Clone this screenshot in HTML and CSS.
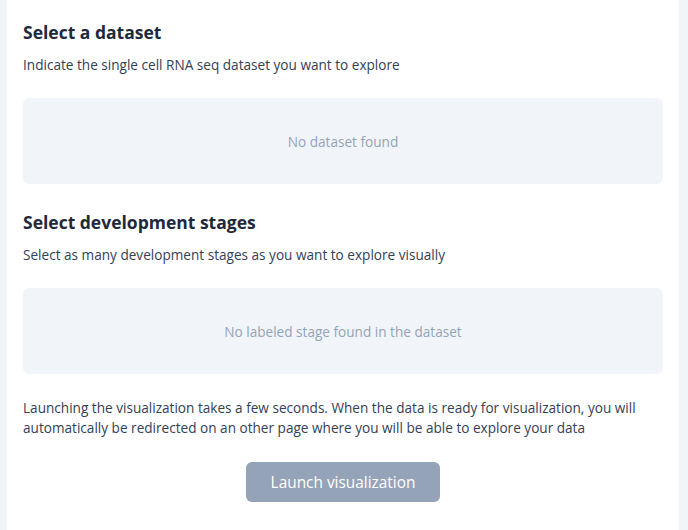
FILE: index.html
```html
<!DOCTYPE html>
<html lang="en">
<head>
<meta charset="utf-8">
<title>Launch visualization</title>
<link rel="stylesheet" href="styles.css">
</head>
<body>
<main class="card">
  <section class="section">
    <h2 class="title">Select a dataset</h2>
    <p class="subtitle">Indicate the single cell RNA seq dataset you want to explore</p>
    <div class="empty">No dataset found</div>
  </section>
  <section class="section">
    <h2 class="title">Select development stages</h2>
    <p class="subtitle">Select as many development stages as you want to explore visually</p>
    <div class="empty">No labeled stage found in the dataset</div>
  </section>
  <p class="note">Launching the visualization takes a few seconds. When the data is ready for visualization, you will automatically be redirected on an other page where you will be able to explore your data</p>
  <div class="actions">
    <button class="launch" disabled>Launch visualization</button>
  </div>
</main>
</body>
</html>
```
FILE: styles.css
```css
html, body {
  margin: 0;
  padding: 0;
  background: #f1f5f9;
  height: 100%;
  overflow: hidden;
}
body {
  font-family: "Open Sans", "Noto Sans", sans-serif;
  color: #334155;
}
.card {
  background: #ffffff;
  margin: 0 9px 0 7px;
  padding: 18px 16px 40px;
  min-height: 100%;
  box-sizing: border-box;
}
.section {
  margin-bottom: 24px;
}
.title {
  margin: 0;
  font-size: 17.5px;
  line-height: 28px;
  font-weight: 700;
  color: #1e293b;
}
.subtitle {
  margin: 9px 0 0;
  font-size: 13.6px;
  line-height: 20px;
  color: #334155;
}
.empty {
  margin-top: 23px;
  height: 86px;
  border-radius: 6px;
  background: #f1f5f9;
  color: #94a3b8;
  font-size: 13.6px;
  display: flex;
  align-items: center;
  justify-content: center;
}
.note {
  margin: 1px 0 0;
  font-size: 13.6px;
  line-height: 20px;
  color: #334155;
}
.actions {
  display: flex;
  justify-content: center;
  margin-top: 24px;
}
.launch {
  width: 194px;
  height: 40px;
  border: none;
  border-radius: 6px;
  background: #94a3b8;
  color: #ffffff;
  font-family: inherit;
  font-size: 15.4px;
}
```
